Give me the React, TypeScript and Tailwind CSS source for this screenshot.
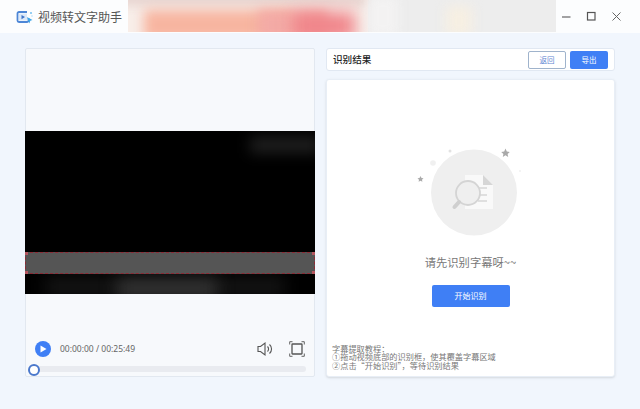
const cjk = "font-['Noto_Sans_CJK_SC','Noto_Sans',sans-serif]";

function Logo() {
  return (
    <svg width="18" height="16" viewBox="0 0 18 16" fill="none">
      <path d="M11 3H3a1.500 1.500 0 0 0-1.500 1.500v7A1.500 1.500 0 0 0 3 13h8a1.500 1.500 0 0 0 1.500-1.500V9" stroke="#4d86d6" strokeWidth="1.800" />
      <path d="M3 4.500h8v7H3z" fill="#dbe8f8" />
      <path d="M5.500 6v4.200l3.500-2.100z" fill="#3f74c8" />
      <path d="M11 8l5.500 3-2.200.8-.9 2.700z" fill="#3ea6e8" />
      <circle cx="15" cy="4" r="1.100" fill="#7cc4f0" />
      <circle cx="16" cy="7" r="0.700" fill="#a3d6f5" />
    </svg>
  );
}

function EmptyIllustration() {
  return (
    <svg width="110" height="80" viewBox="0 0 110 80" className="overflow-visible" fill="none">
      <circle cx="56" cy="43.500" r="43" fill="#efefef" />
      <path d="M47 26h18l10 10v24H47z" fill="#f9f9f9" />
      <path d="M65 26v10h10z" fill="#d6d6d6" />
      <path d="M60 39h9M60 46h9M60 52h9" stroke="#d6d6d6" strokeWidth="1.500" />
      <circle cx="50" cy="44" r="12" fill="#efefef" stroke="#d4d4d4" strokeWidth="1.800" />
      <path d="M41 53l-4.500 5" stroke="#cfcfcf" strokeWidth="4" strokeLinecap="round" />
      <path d="M87.500 -.500l1.300 3 3 .4-2.200 2 .6 3-2.700-1.600-2.700 1.600.6-3-2.200-2 3-.4z" fill="#a9a9a9" />
      <path d="M2.500 27l1 2 2 .3-1.500 1.400.4 2-1.900-1-1.900 1 .4-2-1.500-1.400 2-.3z" fill="#aaa" />
      <circle cx="32" cy="2" r="1.500" fill="#e2e2e2" />
      <circle cx="15" cy="14" r="2.800" fill="#f0f0f0" />
      <circle cx="102" cy="22" r="1" fill="#f0f0f0" />
    </svg>
  );
}

export default function App() {
  return (
    <div className={`w-[640px] h-[409px] overflow-hidden bg-[#f1f6fd] flex flex-col ${cjk}`}>
      <header className="relative h-[33px] shrink-0 bg-[#fcfdfe] flex items-center overflow-hidden">
        <div className="flex items-center gap-[4px] pl-[16px]">
          <Logo />
          <span className="text-[12px] text-[#555]">视频转文字助手</span>
        </div>
        <div className="absolute left-[128px] top-0 w-[428px] h-[32px] overflow-hidden bg-[#ededed]">
          <div className="absolute left-0 top-0 w-[240px] h-[32px] bg-[#f8eee9]" />
          <div className="absolute left-[-10px] top-[-8px] w-[250px] h-[14px] bg-[#e8d6d2] blur-[5px]" />
          <div className="absolute left-[16px] top-[10px] w-[150px] h-[30px] bg-[#f7b5a0] blur-[6px]" />
          <div className="absolute left-[130px] top-[10px] w-[70px] h-[30px] bg-[#f3aaa5] blur-[6px]" />
          <div className="absolute left-[165px] top-[12px] w-[62px] h-[28px] bg-[#f0858a] blur-[8px]" />
          <div className="absolute left-[240px] top-[-4px] w-[30px] h-[40px] bg-[#f3f2f2] blur-[6px]" />
          <div className="absolute left-[318px] top-[6px] w-[26px] h-[30px] bg-[#f6efe2] blur-[6px]" />
        </div>
        <div className="ml-auto flex items-center gap-[12px] pr-[17px]">
          <svg width="13" height="13" viewBox="0 0 13 13" fill="none" stroke="#666" strokeWidth="1.200">
            <path d="M2 7h8.500" />
          </svg>
          <svg width="13" height="13" viewBox="0 0 13 13" fill="none" stroke="#555" strokeWidth="1.200">
            <rect x="2.500" y="2.500" width="7.500" height="7.500" />
          </svg>
          <svg width="13" height="13" viewBox="0 0 13 13" fill="none" stroke="#666" strokeWidth="1">
            <path d="M2.500 2.500l8 8M10.500 2.500l-8 8" />
          </svg>
        </div>
      </header>

      <main className="flex gap-[11px] pl-[25px] pt-[15px]">
        <section className="w-[290px] h-[329px] bg-[#f7f9fc] border border-[#e2e8f0] rounded-[2px] flex flex-col">
          <div className="h-[82px] shrink-0" />
          <div className="relative h-[163px] shrink-0 bg-black -mx-px overflow-hidden">
            <div className="absolute left-[225px] top-[6px] w-[70px] h-[16px] bg-[#1f1f1f] blur-[7px]" />
            <div className="absolute left-[20px] top-[146px] w-[240px] h-[20px] bg-[#141414] blur-[8px]" />
            <div className="absolute left-[92px] top-[148px] w-[100px] h-[20px] bg-[#333] blur-[8px]" />
            <div className="absolute left-0 right-0 top-[121px] h-[22px] bg-[#555] border border-dashed border-[#8c2a35]">
              <span className="absolute -left-[1px] -top-[1px] w-[3px] h-[3px] bg-[#b5555f]" />
              <span className="absolute -right-[1px] -top-[1px] w-[3px] h-[3px] bg-[#b5555f]" />
              <span className="absolute -left-[1px] -bottom-[1px] w-[3px] h-[3px] bg-[#b5555f]" />
              <span className="absolute -right-[1px] -bottom-[1px] w-[3px] h-[3px] bg-[#b5555f]" />
            </div>
          </div>
          <div className="mt-auto px-[8px] pb-[4px]">
            <div className="flex items-center px-[1px]">
              <span className="w-[16px] h-[16px] rounded-full bg-[#3f7ff5] flex items-center justify-center">
                <svg width="8" height="8" viewBox="0 0 8 8"><path d="M1.500 0.500v7l6-3.500z" fill="#fff" /></svg>
              </span>
              <span className="ml-[9px] text-[8.500px] text-[#666] font-['Noto_Sans',sans-serif]">00:00:00 / 00:25:49</span>
              <svg className="ml-auto" width="16" height="16" viewBox="0 0 16 16" fill="none" stroke="#555" strokeWidth="1.100">
                <path d="M1 5.500h2.500L8 2v12L3.500 10.500H1z" />
                <path d="M10.500 5.500a3.500 3.500 0 0 1 0 5M12.500 3.500a6 6 0 0 1 0 9" />
              </svg>
              <svg className="ml-[16px]" width="16" height="16" viewBox="0 0 16 16" fill="none" stroke="#555">
                <rect x="3" y="3" width="10" height="10" rx="0.500" strokeWidth="1.300" />
                <path d="M.700 3.500V.700h2.800M12.500.700h2.800v2.800M15.300 12.500v2.800h-2.800M3.500 15.300H.700v-2.800" strokeWidth="0.900" />
              </svg>
            </div>
            <div className="relative mt-[9px] h-[6px] bg-[#e9ebf0] rounded-full">
              <span className="absolute -left-[6.500px] -top-[2px] w-[12px] h-[12px] rounded-full bg-white border-2 border-[#4a78cc]" />
            </div>
          </div>
        </section>

        <section className="w-[289px] flex flex-col gap-[8px]">
          <div className="h-[23px] bg-white border border-[#e1e8f2] rounded-[3px] flex items-center px-[6px]">
            <span className="text-[9.600px] font-medium text-[#222]">识别结果</span>
            <button className="ml-auto w-[38px] h-[18px] bg-white border border-[#9fb3cc] rounded-[2px] text-[7.500px] text-[#5f86d2]">返回</button>
            <button className="ml-[4px] w-[38px] h-[18px] bg-[#3f7ff5] rounded-[2px] text-[7.500px] text-white">导出</button>
          </div>
          <div className="h-[298px] bg-white border border-[#e8eef6] rounded-[3px] flex flex-col items-center shadow-sm">
            <div className="mt-[69px] ml-[4px]"><EmptyIllustration /></div>
            <p className="mt-[25px] text-[11.300px] text-[#777]">请先识别字幕呀~~</p>
            <button className="mt-[14px] w-[78px] h-[22px] bg-[#3f7ff5] rounded-[2px] text-[8px] text-white">开始识别</button>
            <div className="mt-auto self-start pl-[5px] pb-[7px] text-[8.200px] leading-[8.500px] text-[#777]">
              <p>字幕提取教程：</p>
              <p>①拖动视频底部的识别框，使其覆盖字幕区域</p>
              <p>②点击“开始识别”，等待识别结果</p>
            </div>
          </div>
        </section>
      </main>
    </div>
  );
}
